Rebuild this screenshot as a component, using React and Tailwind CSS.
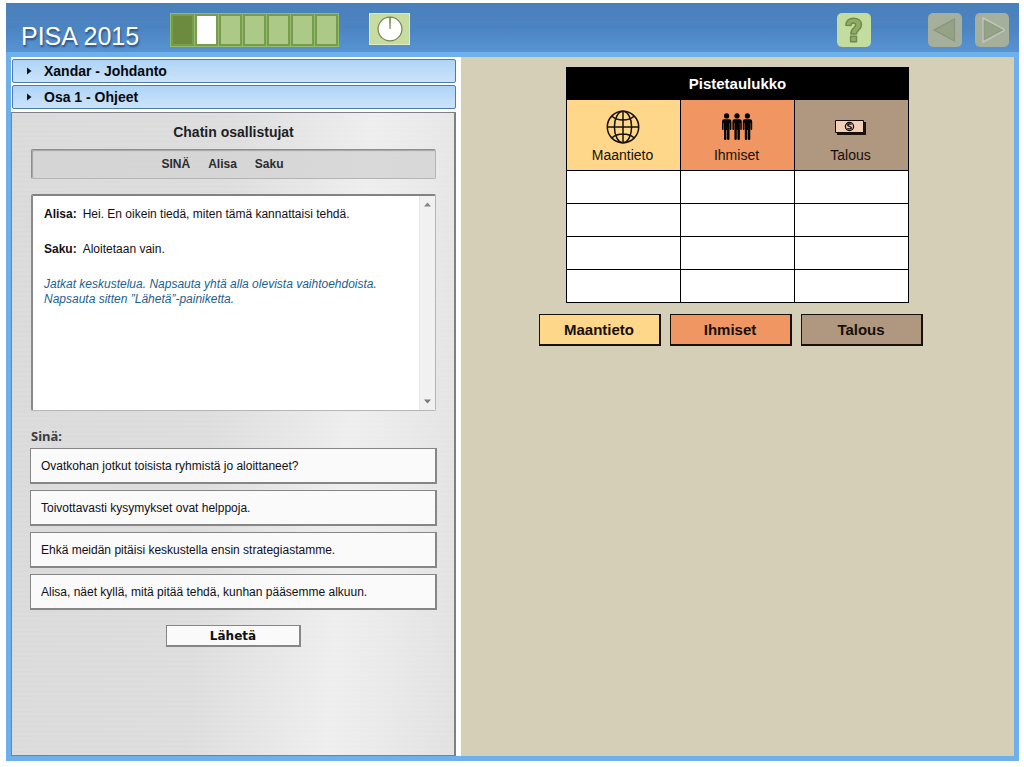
import React, { useState } from "react";

const OPTIONS = [
  "Ovatkohan jotkut toisista ryhmistä jo aloittaneet?",
  "Toivottavasti kysymykset ovat helppoja.",
  "Ehkä meidän pitäisi keskustella ensin strategiastamme.",
  "Alisa, näet kyllä, mitä pitää tehdä, kunhan pääsemme alkuun.",
];

const SUBJECTS = [
  { name: "Maantieto", bg: "bg-[#ffd78a]", Icon: GlobeIcon },
  { name: "Ihmiset", bg: "bg-[#ef9663]", Icon: PeopleIcon },
  { name: "Talous", bg: "bg-[#b0977f]", Icon: MoneyIcon },
];

function GlobeIcon() {
  return (
    <svg width="34" height="34" viewBox="0 0 34 34" fill="none" stroke="#17100a" strokeWidth="1.5" aria-hidden="true">
      <circle cx="17" cy="17" r="15.7" />
      <ellipse cx="17" cy="17" rx="8.6" ry="15.7" />
      <path d="M17 1.3v31.4M1.3 17h31.4M6 6.2c5.5 5 16.500 5 22 0M6 27.800c5.500-5 16.500-5 22 0" />
    </svg>
  );
}

function Person({ x }) {
  return (
    <g transform={`translate(${x} 0)`}>
      <circle cx="5" cy="2.900" r="2.600" />
      <path d="M2.200 6.200h5.600q2 0 2 2.200v7.600q0 .9-.8.900t-.8-.9V10h-.3v16q0 1-1.200 1t-1.300-1v-9h-.6v9q0 1-1.200 1t-1.200-1V10h-.4v6q0 .9-.8.900t-.8-.9V8.400q0-2.200 2-2.200z" />
    </g>
  );
}

function PeopleIcon() {
  return (
    <svg width="32" height="28" viewBox="0 0 32 28" fill="#050302" aria-hidden="true">
      <Person x={0.6} />
      <Person x={11} />
      <Person x={21.4} />
    </svg>
  );
}

function MoneyIcon() {
  return (
    <svg width="34" height="16" viewBox="0 0 34 16" aria-hidden="true">
      <path d="M3 3h29v13H3z" fill="#1c120c" />
      <path d="M1.500 1.500h28v12h-28z" fill="#f3cfb8" stroke="#120b07" />
      <circle cx="15.500" cy="7.500" r="4.100" fill="none" stroke="#120b07" strokeWidth="1.300" />
      <path d="M17.500 5.600c-1.200-1-3.900-.8-3.800.5.100 1.400 3.700 1.100 3.700 2.700 0 1.400-2.800 1.500-4 .4" fill="none" stroke="#120b07" strokeWidth="1.300" />
    </svg>
  );
}

function Progress() {
  const cells = ["bg-[#6d8b3f]", "bg-white", "bg-[#adc987]", "bg-[#adc987]", "bg-[#adc987]", "bg-[#adc987]", "bg-[#adc987]"];
  return (
    <ol aria-label="Eteneminen" className="ml-[31px] flex h-[34px] shrink-0 border border-[#8fbd6c] bg-[#8fbd6c]">
      {cells.map((c, i) => (
        <li key={i} className={`mr-px w-[23px] border-2 border-[#7a9a4d] last:mr-0 ${c}`} />
      ))}
    </ol>
  );
}

function Header() {
  return (
    <header className="flex h-[49px] items-start bg-linear-to-b from-[#4a80ba] via-[#4c84c2] to-[#5793d3] pl-[15px] pr-2.5 pt-2.5">
      <h1 className="self-end whitespace-nowrap text-[25px] leading-[31px] text-white [text-shadow:1px_2px_2px_#2b4f7c]">PISA 2015</h1>
      <Progress />
      <div className="ml-[30px] flex h-8 w-[41px] shrink-0 items-center justify-center border border-[#dcecc4] bg-[#c6dca0]">
        <svg width="26" height="26" viewBox="0 0 26 26" aria-label="Aika" role="img">
          <circle cx="13" cy="13" r="11.900" fill="#fff" stroke="#76864f" strokeWidth="1.200" />
          <path d="M12.300 1.200 13 13l.8-11.800z" fill="#9aa67c" stroke="#76864f" strokeWidth=".7" />
        </svg>
      </div>
      <button type="button" aria-label="Ohje" className="ml-auto flex size-[34px] shrink-0 items-center justify-center rounded-[5px] bg-[#c3dda0]">
        <svg width="20" height="26" viewBox="0 0 20 26" fill="none" aria-hidden="true">
          <path d="M1.800 8.200C2.200 3.600 5.200 1.300 9.600 1.300c4.700 0 7.900 2.500 7.900 6.500 0 5-5.100 5.200-5.100 9.300H6.800c0-6.400 4.800-5.900 4.800-9 0-1.400-.8-2.200-2.200-2.200-1.500 0-2.300.9-2.500 2.700z" fill="#8fad61" stroke="#71894f" strokeWidth="1.500" strokeLinejoin="round" />
          <path d="M6.600 19.300h5.900v5.400H6.600z" fill="#8fad61" stroke="#71894f" strokeWidth="1.500" strokeLinejoin="round" />
        </svg>
      </button>
      <nav className="ml-[57px] flex shrink-0 gap-[13px]">
        <button type="button" aria-label="Edellinen" className="flex size-[34px] items-center justify-center rounded-[5px] bg-[#a6af9c]">
          <svg width="26" height="26" viewBox="0 0 26 26" aria-hidden="true">
            <path d="M22.500 2v22L2 13z" fill="#94a387" stroke="#87957c" strokeWidth="1.200" />
          </svg>
        </button>
        <button type="button" aria-label="Seuraava" className="flex size-[34px] items-center justify-center rounded-[5px] bg-[#a6af9c]">
          <svg width="26" height="26" viewBox="0 0 26 26" aria-hidden="true">
            <path d="M4.500 1.500v23L25 13z" fill="#94a387" stroke="#bcc4b4" strokeWidth="2.600" />
            <path d="M5.200 3.200v19.600L23.500 13z" fill="#94a387" stroke="#87957c" strokeWidth=".9" />
          </svg>
        </button>
      </nav>
    </header>
  );
}

function AccordionRow({ title }) {
  return (
    <button
      type="button"
      aria-expanded="false"
      className="flex h-6 items-center gap-3 rounded-[2px] border border-[#4c7ab2] bg-linear-to-b from-[#add4f6] to-[#cce3fa] pl-3.5 text-left text-sm font-bold text-[#07090d]"
    >
      <svg width="5" height="8" viewBox="0 0 5 8" aria-hidden="true">
        <path d="M0 0.500v7L4.500 4z" fill="#0a1420" />
      </svg>
      {title}
    </button>
  );
}

function ScrollBar() {
  return (
    <div className="flex w-4 shrink-0 flex-col justify-between border-l border-[#e4e4e4] bg-[#f1f1f1] py-1.5">
      <button type="button" aria-label="Vieritä ylös" className="flex justify-center">
        <svg width="7" height="5" viewBox="0 0 7 5" aria-hidden="true"><path d="M0 4.500h7L3.500 0.500z" fill="#858585" /></svg>
      </button>
      <button type="button" aria-label="Vieritä alas" className="flex justify-center">
        <svg width="7" height="5" viewBox="0 0 7 5" aria-hidden="true"><path d="M0 .5h7L3.500 4.500z" fill="#7a7a7a" /></svg>
      </button>
    </div>
  );
}

function ChatPanel() {
  const [choice, setChoice] = useState(null);
  return (
    <section className="mt-[3px] flex grow flex-col border border-r-2 border-[#7d8084] bg-[repeating-linear-gradient(0deg,rgba(255,255,255,0.06)_0px,rgba(255,255,255,0.06)_2px,transparent_2px,transparent_5px),linear-gradient(94deg,#dadada_0%,#dddddd_45%,#eeeeee_74%,#e9e9e9_86%,#e1e1e1_100%)] pt-[9px] pr-[17px] pl-[18px]">
      <h2 className="text-center text-sm leading-5 font-bold text-[#1d1f24]">Chatin osallistujat</h2>
      <ul className="mx-px mt-[7px] flex h-[30px] items-center justify-center gap-[18px] rounded-[2px] border border-[#b4b4b4] border-t-[#8e8e8e] border-l-[#8e8e8e] bg-[#d3d3d3]/80 pr-[22px] text-xs font-bold text-[#2c2c2c] shadow-[inset_1px_1px_1px_#a5a5a5]">
        <li>SINÄ</li>
        <li>Alisa</li>
        <li>Saku</li>
      </ul>
      <div className="mx-px mt-[15px] flex h-[217px] rounded-[2px] border-t-2 border-r border-b border-l-2 border-[#b6b6b6] border-t-[#828282] border-l-[#8a8a8a] bg-white">
        <div className="flex grow flex-col gap-5 pt-[11px] pl-[11px] text-xs leading-[15px] text-[#101018]">
          <p><b className="mr-1.5">Alisa:</b>Hei. En oikein tiedä, miten tämä kannattaisi tehdä.</p>
          <p><b className="mr-1.5">Saku:</b>Aloitetaan vain.</p>
          <p className="text-[#1c5f8f] italic">
            Jatkat keskustelua. Napsauta yhtä alla olevista vaihtoehdoista.
            <br />
            Napsauta sitten ”Lähetä”-painiketta.
          </p>
        </div>
        <ScrollBar />
      </div>
      <h3 className="mx-px mt-4 h-[21px] font-['Noto_Sans',sans-serif] text-[13px] leading-[18px] font-bold text-[#3c3c3c]">Sinä:</h3>
      <div className="flex flex-col gap-1.5">
        {OPTIONS.map((text, i) => (
          <button
            key={text}
            type="button"
            aria-pressed={choice === i}
            onClick={() => setChoice(i)}
            className="h-9 border border-r-2 border-b-2 border-[#868686] bg-[#fafafa] px-2.5 text-left text-xs text-[#101018]"
          >
            {text}
          </button>
        ))}
      </div>
      <button
        type="button"
        className="mt-[15px] mb-6 h-[22px] w-[135px] self-center border border-r-2 border-b-2 border-[#868686] bg-[#fafafa] font-['DejaVu_Sans',sans-serif] text-xs leading-[18px] font-bold text-[#101010]"
      >
        Lähetä
      </button>
    </section>
  );
}

function ScoreTable() {
  return (
    <table className="w-[343px] table-fixed border-collapse border border-black bg-white text-[#170f08]">
      <thead>
        <tr>
          <th colSpan={3} className="h-8 border border-black bg-black p-0 text-[15px] leading-5 font-bold text-white">Pistetaulukko</th>
        </tr>
        <tr>
          {SUBJECTS.map(({ name, bg, Icon }) => (
            <th key={name} className={`border border-black p-0 font-normal ${bg}`}>
              <div className="flex h-[70px] flex-col items-center pt-2.5 pr-0.5">
                <span className="flex h-[34px] items-center"><Icon /></span>
                <span className="mt-px text-sm leading-5">{name}</span>
              </div>
            </th>
          ))}
        </tr>
      </thead>
      <tbody>
        {[0, 1, 2, 3].map((row) => (
          <tr key={row}>
            {SUBJECTS.map((s) => (
              <td key={s.name} className="h-[33px] border border-black p-0" />
            ))}
          </tr>
        ))}
      </tbody>
    </table>
  );
}

export default function App() {
  return (
    <div className="flex min-h-screen flex-col bg-white pt-[3px] pr-[5px] pb-1.5 pl-1.5 font-['Liberation_Sans',Arial,sans-serif]">
      <Header />
      <main className="grid grow grid-cols-[450fr_553fr] border-5 border-[#6eb0ea] bg-white">
        <div className="flex min-w-0 flex-col pt-0.5 pr-[5px]">
          <div className="ml-px flex flex-col gap-0.5">
            <AccordionRow title="Xandar - Johdanto" />
            <AccordionRow title="Osa 1 - Ohjeet" />
          </div>
          <ChatPanel />
        </div>
        <section className="flex min-w-0 flex-col items-center bg-[#d5cfb7] pt-2.5">
          <ScoreTable />
          <div className="mt-[11px] flex gap-[9px] pr-3.5">
            {SUBJECTS.map(({ name, bg }) => (
              <button
                key={name}
                type="button"
                className={`h-8 w-[122px] border border-r-2 border-b-2 border-[#17110b] text-[15px] leading-5 font-bold text-[#170f08] ${bg}`}
              >
                {name}
              </button>
            ))}
          </div>
        </section>
      </main>
    </div>
  );
}
